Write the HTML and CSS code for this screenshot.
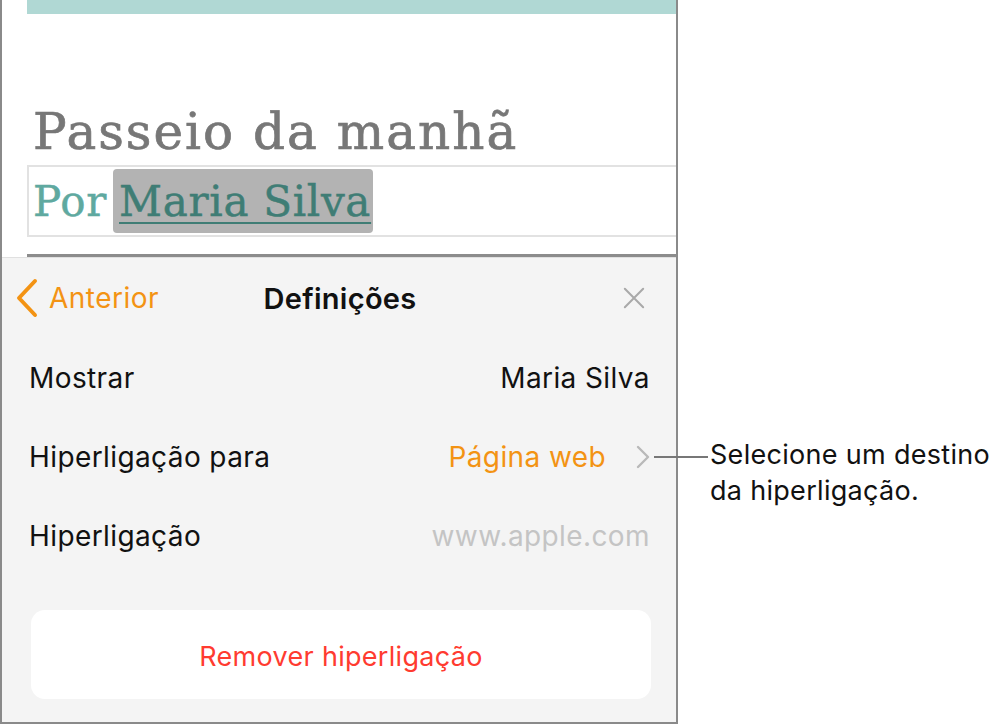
FILE: index.html
```html
<!DOCTYPE html>
<html lang="pt">
<head>
  <meta charset="UTF-8" />
  <title>Definições da hiperligação</title>
  <link rel="stylesheet" href="styles.css">
</head>
<body>

  <div class="frame">
    <div class="doc">
      <div class="doc-bar"></div>
      <h1 class="doc-title">Passeio da manhã</h1>
      <div class="byline">
        <span class="by">Por</span>
        <span class="selected"><span class="link">Maria Silva</span></span>
      </div>
      <div class="doc-rule"></div>
    </div>

    <div class="panel">
      <div class="panel-nav">
        <a class="back">
          <svg width="24" height="40" viewBox="0 0 24 40">
            <path d="M20 3 L4 20 L20 37" fill="none" stroke="#f39313" stroke-width="4" stroke-linecap="round" stroke-linejoin="round"/>
          </svg>
          Anterior
        </a>
        <h2>Definições</h2>
        <span class="close">
          <svg width="24" height="24" viewBox="0 0 24 24">
            <path d="M2 2 L22 22 M22 2 L2 22" stroke="#a9a9a9" stroke-width="2.2" stroke-linecap="round"/>
          </svg>
        </span>
      </div>

      <div class="row">
        <span class="label">Mostrar</span>
        <span class="value">Maria Silva</span>
      </div>
      <div class="row">
        <span class="label">Hiperligação para</span>
        <span class="value orange">Página web</span>
        <span class="chevron">
          <svg width="14" height="24" viewBox="0 0 14 24">
            <path d="M2 2 L12 12 L2 22" fill="none" stroke="#b9b9b9" stroke-width="2.4" stroke-linecap="round" stroke-linejoin="round"/>
          </svg>
          <span class="callout">
            <span class="callout-line"></span>
            <span class="callout-text">Selecione um destino<br>da hiperligação.</span>
          </span>
        </span>
      </div>
      <div class="row">
        <span class="label">Hiperligação</span>
        <span class="value muted">www.apple.com</span>
      </div>

      <button class="remove">Remover hiperligação</button>
    </div>
  </div>

</body>
</html>
```

FILE: styles.css
```css
:root {
  --orange: #f39313;
  --teal: #5fa9a0;
  --teal-dark: #3f7d75;
  --panel-bg: #f4f4f4;
  --frame: #8a8a8a;
}

body {
  margin: 0;
  background: white;
  font-family: Inter, Roboto, "Noto Sans", sans-serif;
  color: #111;
}

.frame {
  width: 674px;
  height: 722px;
  border-left: 2px solid var(--frame);
  border-right: 2px solid var(--frame);
  border-bottom: 2px solid var(--frame);
  display: flex;
  flex-direction: column;
}

.doc {
  padding-left: 25px;
}

.doc-bar {
  height: 14px;
  background: #b0d8d4;
}

.doc-title {
  font-family: "DejaVu Serif", "Liberation Serif", serif;
  font-weight: normal;
  font-size: 50px;
  letter-spacing: 2px;
  color: #777;
  -webkit-text-stroke: 0.7px #777;
  margin: 88px 0 0 6px;
  line-height: 60px;
  height: 63px;
}

.byline {
  height: 68px;
  border: 2px solid #e2e2e2;
  border-right: none;
  display: flex;
  align-items: center;
  gap: 6px;
  padding-left: 4px;
  font-family: "DejaVu Serif", "Liberation Serif", serif;
  font-size: 42px;
  letter-spacing: 0.7px;
}

.by {
  color: var(--teal);
  -webkit-text-stroke: 0.5px var(--teal);
}

.selected {
  background: #b3b3b3;
  border-radius: 4px;
  height: 64px;
  display: flex;
  align-items: center;
  padding: 0 2px 0 6px;
}

.link {
  color: var(--teal-dark);
  -webkit-text-stroke: 0.5px var(--teal-dark);
  text-decoration: underline;
  text-decoration-thickness: 2px;
  text-underline-offset: 6px;
}

.doc-rule {
  margin-top: 17px;
  height: 3px;
  background: #8c8c8c;
}

.panel {
  flex: 1;
  background: var(--panel-bg);
  border-top: 1px solid #e0e0e0;
  padding: 0 26px 0 27px;
  display: flex;
  flex-direction: column;
}

.panel-nav {
  height: 80px;
  display: flex;
  align-items: center;
  justify-content: space-between;
  position: relative;
  margin: 0 5px 0 -14px;
  font-size: 28px;
  letter-spacing: 0.5px;
}

.back {
  color: var(--orange);
  display: flex;
  align-items: center;
  gap: 10px;
}

.panel-nav h2 {
  position: absolute;
  left: 0;
  right: -20px;
  text-align: center;
  margin: 0;
  font-size: 29px;
  letter-spacing: 0.3px;
  font-weight: 600;
  pointer-events: none;
}

.close {
  display: flex;
}

.close svg {
  width: 22px;
  height: 22px;
}

.row {
  height: 79px;
  display: flex;
  align-items: center;
  font-size: 28px;
  letter-spacing: 0.4px;
}

.label {
  flex: 1;
}

.value.orange {
  color: var(--orange);
}

.value.muted {
  color: #c4c4c4;
}

.chevron {
  display: flex;
  margin-left: 30px;
  position: relative;
}

.callout {
  position: absolute;
  left: 18px;
  top: 11px;
  display: flex;
  align-items: flex-start;
  white-space: nowrap;
}

.callout-line {
  width: 54px;
  height: 2px;
  background: #777;
}

.callout-text {
  font-size: 27px;
  letter-spacing: 0.3px;
  line-height: 36px;
  color: #111;
  margin: -19px 0 0 2px;
}

.remove {
  margin-top: 35px;
  height: 89px;
  width: 620px;
  margin-left: 2px;
  padding-top: 4px;
  border: none;
  border-radius: 14px;
  background: white;
  color: #ff3b30;
  font-family: Inter, Roboto, "Noto Sans", sans-serif;
  font-size: 27px;
  letter-spacing: 0.3px;
}
```
